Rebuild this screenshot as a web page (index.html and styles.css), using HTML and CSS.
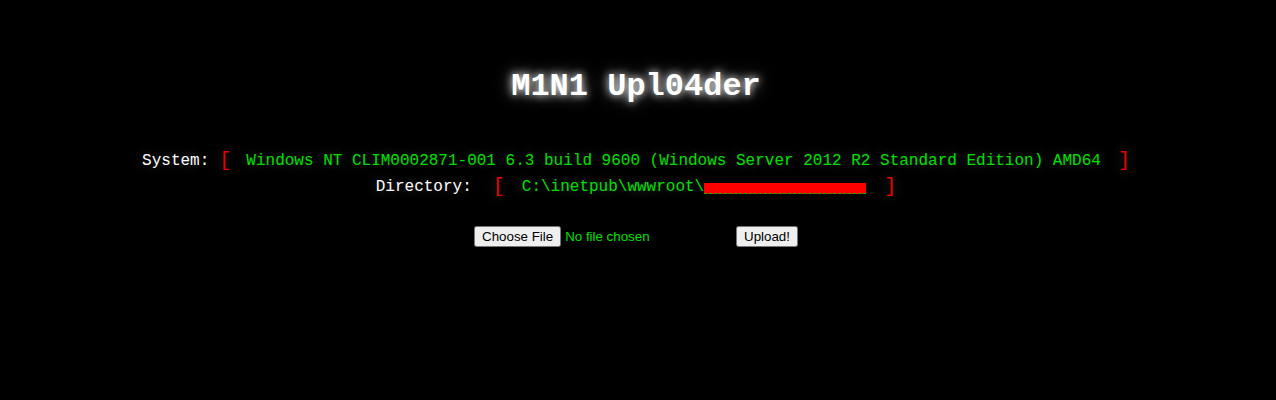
FILE: index.html
```html
<!DOCTYPE html>
<html>
<head>
<meta charset="utf-8">
<title>M1N1 Upl04der</title>
<link rel="stylesheet" href="styles.css">
</head>
<body>
<div class="page">
  <h1 class="title">M1N1 Upl04der</h1>
  <div class="info">
    <div class="line line-sys">
      <span class="label">System:</span>
      <span class="br br-open">[</span>
      <span class="val">Windows NT CLIM0002871-001 6.3 build 9600 (Windows Server 2012 R2 Standard Edition) AMD64</span>
      <span class="br br-close">]</span>
    </div>
    <div class="line line-dir">
      <span class="label">Directory:</span>
      <span class="br br-open">[</span>
      <span class="val">C:\inetpub\wwwroot\</span><span class="redact"></span>
      <span class="br br-close">]</span>
    </div>
  </div>
  <form class="upload">
    <input class="file" type="file" name="file">
    <input class="submit" type="submit" value="Upload!">
  </form>
</div>
</body>
</html>
```
FILE: styles.css
```css
html, body {
  margin: 0;
  padding: 0;
  background: #000;
}
.page {
  display: flex;
  flex-direction: column;
  align-items: center;
  padding-top: 68px;
  font-family: "Liberation Mono", "Courier New", monospace;
}
.title {
  margin: 0;
  padding-right: 4px;
  font-size: 32px;
  line-height: 38px;
  font-weight: bold;
  color: #fff;
  text-shadow: 0 0 8px #fff, 0 0 18px #777;
}
.info {
  margin-top: 42px;
  display: flex;
  flex-direction: column;
  align-items: center;
  text-shadow: 0 0 12px #444, 0 0 24px #222;
}
.line {
  display: flex;
  align-items: center;
  height: 26px;
  font-size: 16px;
  padding-right: 4px;
}
.label {
  color: #fff;
}
.br {
  color: #e00;
  font-size: 20px;
  line-height: 20px;
}
.val {
  color: #00e000;
}
.line-sys .br-open { margin: 0 15px 0 10px; }
.line-sys .br-close { margin-left: 17px; }
.line-dir .br-open { margin: 0 17px 0 21px; }
.line-dir .br-close { margin-left: 18px; }
.redact {
  display: inline-block;
  width: 162px;
  height: 10px;
  margin-top: 2px;
  background: #f00;
  border-bottom: 1px dashed #0b0;
}
.upload {
  margin-top: 26px;
  display: flex;
  align-items: center;
  gap: 9px;
  padding-right: 4px;
}
.file {
  color: #00e000;
  font-family: "Liberation Sans", Arial, sans-serif;
  font-size: 13.33px;
  width: 253px;
}
.submit {
  font-family: "Liberation Sans", Arial, sans-serif;
  font-size: 13.33px;
}
```
